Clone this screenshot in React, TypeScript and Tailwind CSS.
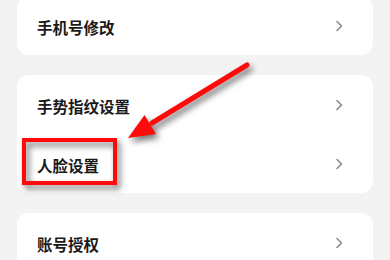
import React from "react";

const groups: string[][] = [["手机号修改"], ["手势指纹设置", "人脸设置"], ["账号授权"]];

function Chevron() {
    return (
        <svg width="8" height="12" viewBox="0 0 8 12" fill="none">
            <path d="M2 1.5L6.5 6L2 10.5" stroke="#8a8a8a" strokeWidth="1.6" strokeLinecap="round" strokeLinejoin="round" />
        </svg>
    );
}

export default function App() {
    return (
        <div
            className="relative w-[390px] h-[260px] overflow-hidden bg-[#f3f3f3]"
            style={{ fontFamily: '"Noto Sans CJK SC", "Noto Sans", sans-serif' }}
        >
            {/* Settings list */}
            <div className="flex flex-col gap-5 px-[17px] -mt-[4px]">
                {groups.map((rows, i) => (
                    <div key={i} className="flex flex-col rounded-xl bg-white">
                        {rows.map((label) => (
                            <div key={label} className="flex h-[59px] items-center justify-between pl-5 pr-[30px]">
                                <span className="mt-[4px] text-[15.5px] font-bold text-[#1a1a1a]">{label}</span>
                                <Chevron />
                            </div>
                        ))}
                    </div>
                ))}
            </div>

            {/* Annotation: highlight box */}
            <div className="absolute left-[22px] top-[138px] w-[95px] h-[47px] border-[4px] border-[#ff0a0a] drop-shadow-[3px_4px_3px_rgba(0,0,0,0.55)]" />

            {/* Annotation: arrow */}
            <svg
                className="absolute left-0 top-0 drop-shadow-[3px_4px_3px_rgba(0,0,0,0.55)]"
                width="390"
                height="260"
                viewBox="0 0 390 260"
            >
                <line x1="247" y1="65" x2="152" y2="123" stroke="#ff0a0a" strokeWidth="5" strokeLinecap="round" />
                <polygon points="128,138 144.5,115 156,134" fill="#ff0a0a" />
            </svg>
        </div>
    );
}
